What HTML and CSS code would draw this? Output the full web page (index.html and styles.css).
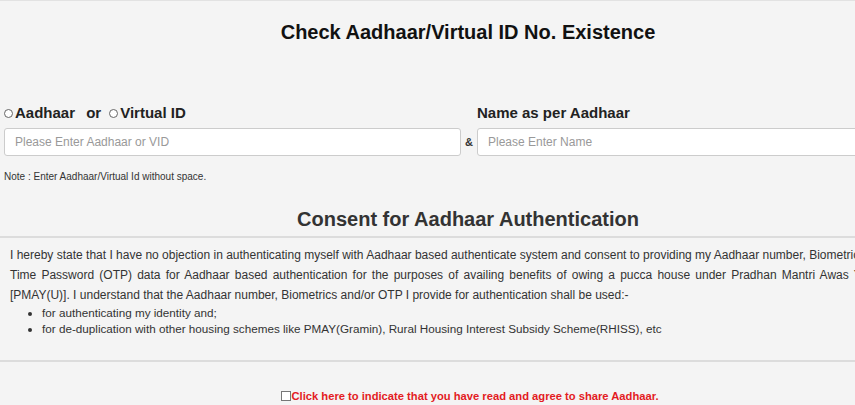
FILE: index.html
```html
<!DOCTYPE html>
<html>
<head>
<meta charset="utf-8">
<link rel="stylesheet" href="styles.css">
</head>
<body>
<div class="page">
  <h3 class="title">Check Aadhaar/Virtual ID No. Existence</h3>
  <div class="form-row">
    <div class="field">
      <div class="label"><span class="radio"></span>Aadhaar <span class="or">or</span> <span class="radio"></span>Virtual ID</div>
      <input class="input" type="text" placeholder="Please Enter Aadhaar or VID">
    </div>
    <div class="amp">&amp;</div>
    <div class="field">
      <div class="label">Name as per Aadhaar</div>
      <input class="input" type="text" placeholder="Please Enter Name">
    </div>
  </div>
  <div class="note">Note : Enter Aadhaar/Virtual Id without space.</div>
  <h3 class="consent-title">Consent for Aadhaar Authentication</h3>
  <div class="rule"></div>
  <div class="consent">
    <p><span class="line">I hereby state that I have no objection in authenticating myself with Aadhaar based authenticate system and consent to providing my Aadhaar number, Biometrics and One</span><span class="line">Time Password (OTP) data for Aadhaar based authentication for the purposes of availing benefits of owing a pucca house under Pradhan Mantri Awas Yojana</span><span class="last">[PMAY(U)]. I understand that the Aadhaar number, Biometrics and/or OTP I provide for authentication shall be used:-</span></p>
    <ul>
      <li>for authenticating my identity and;</li>
      <li>for de-duplication with other housing schemes like PMAY(Gramin), Rural Housing Interest Subsidy Scheme(RHISS), etc</li>
    </ul>
  </div>
  <div class="rule"></div>
  <div class="agree"><span class="check"></span>Click here to indicate that you have read and agree to share Aadhaar.</div>
</div>
</body>
</html>
```
FILE: styles.css
```css
html, body {
  margin: 0;
  padding: 0;
  overflow: hidden;
  background: #f4f4f4;
}
body {
  font-family: "Liberation Sans", Arial, sans-serif;
  color: #333;
  border-top: 1px solid #e2e2e2;
}
.page {
  width: 936px;
}
.title {
  margin: 0;
  padding-top: 20px;
  height: 74px;
  text-align: center;
  font-size: 20px;
  font-weight: bold;
  color: #111;
  line-height: 22px;
  box-sizing: border-box;
}
.form-row {
  display: flex;
  align-items: flex-end;
  padding-left: 4px;
  padding-top: 28px;
}
.field {
  width: 457px;
  display: flex;
  flex-direction: column;
}
.label {
  font-size: 15px;
  font-weight: bold;
  color: #222;
  line-height: 20px;
  height: 20px;
  margin-bottom: 5px;
  display: flex;
  align-items: center;
  white-space: pre;
}
.or {
  margin: 0 8px 0 7px;
}
.radio {
  display: inline-block;
  width: 7px;
  height: 7px;
  border: 1px solid #666;
  border-radius: 50%;
  margin-right: 2px;
  background: #fff;
}
.input {
  height: 28px;
  box-sizing: border-box;
  border: 1px solid #ccc;
  border-radius: 3px;
  background: #fff;
  padding: 0 10px;
  font-family: "Liberation Sans", Arial, sans-serif;
  font-size: 12px;
  margin: 0;
}
.input::placeholder {
  color: #999;
}
.amp {
  width: 16px;
  text-align: center;
  font-size: 11px;
  font-weight: bold;
  line-height: 28px;
  height: 28px;
  color: #333;
}
.note {
  font-size: 10px;
  padding-left: 4px;
  margin-top: 14px;
  line-height: 14px;
  color: #333;
}
.consent-title {
  margin: 0;
  padding-top: 23px;
  height: 52px;
  box-sizing: border-box;
  text-align: center;
  font-size: 20px;
  color: #333;
  line-height: 24px;
}
.rule {
  border-top: 2px solid #dcdcdc;
}
.consent {
  padding: 7px 46px 0 10px;
  font-size: 12px;
  height: 122px;
  box-sizing: border-box;
}
.consent p {
  margin: 0;
  line-height: 20px;
}
.line {
  display: block;
  white-space: nowrap;
  text-align: justify;
  text-align-last: justify;
}
.last {
  display: block;
}
.consent ul {
  margin: 0;
  padding-left: 32px;
  line-height: 16px;
  font-size: 11.7px;
}
.agree {
  margin-top: 27px;
  padding-left: 4px;
  text-align: center;
  color: #e31b23;
  font-size: 11.2px;
  font-weight: bold;
  line-height: 14px;
}
.check {
  display: inline-block;
  width: 8px;
  height: 8px;
  border: 1px solid #777;
  background: #fff;
  vertical-align: -1px;
}
```
